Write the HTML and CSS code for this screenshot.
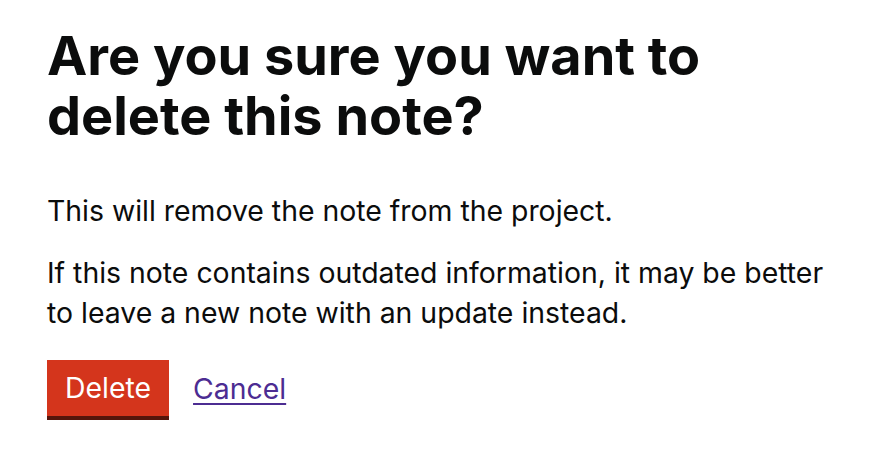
FILE: index.html
```html
<!DOCTYPE html>
<html lang="en">
<head>
<meta charset="utf-8">
<link rel="stylesheet" href="styles.css">
<title>Delete note</title>
</head>
<body>
<main class="page">
  <h1 class="heading">Are you sure you want to delete this note?</h1>
  <p class="body">This will remove the note from the project.</p>
  <p class="body">If this note contains outdated information, it may be better to leave a new note with an update instead.</p>
  <div class="actions">
    <button class="btn-warning" type="button">Delete</button>
    <a class="link" href="#">Cancel</a>
  </div>
</main>
</body>
</html>
```
FILE: styles.css
```css
html, body {
  margin: 0;
  padding: 0;
  background: #ffffff;
}
body {
  font-family: Inter, "Noto Sans", sans-serif;
  color: #0b0c0c;
}
.page {
  padding: 26px 47px;
  max-width: 790px;
}
.heading {
  font-size: 54px;
  line-height: 60px;
  font-weight: 700;
  margin: 0 0 45px;
  max-width: 700px;
}
.body {
  font-size: 28.4px;
  line-height: 40px;
  margin: 0 0 22px;
}
.actions {
  display: flex;
  align-items: center;
  gap: 24px;
  margin-top: 27px;
}
.btn-warning {
  font-family: inherit;
  font-size: 28.4px;
  line-height: 1;
  color: #ffffff;
  background: #d4351c;
  border: 0;
  border-radius: 0;
  padding: 0 18px;
  height: 56px;
  box-shadow: 0 4px 0 #55150b;
  cursor: pointer;
}
.link {
  font-size: 28.4px;
  color: #4c2c92;
  text-decoration: underline;
  text-decoration-thickness: 2px;
  text-underline-offset: 4px;
}
```
